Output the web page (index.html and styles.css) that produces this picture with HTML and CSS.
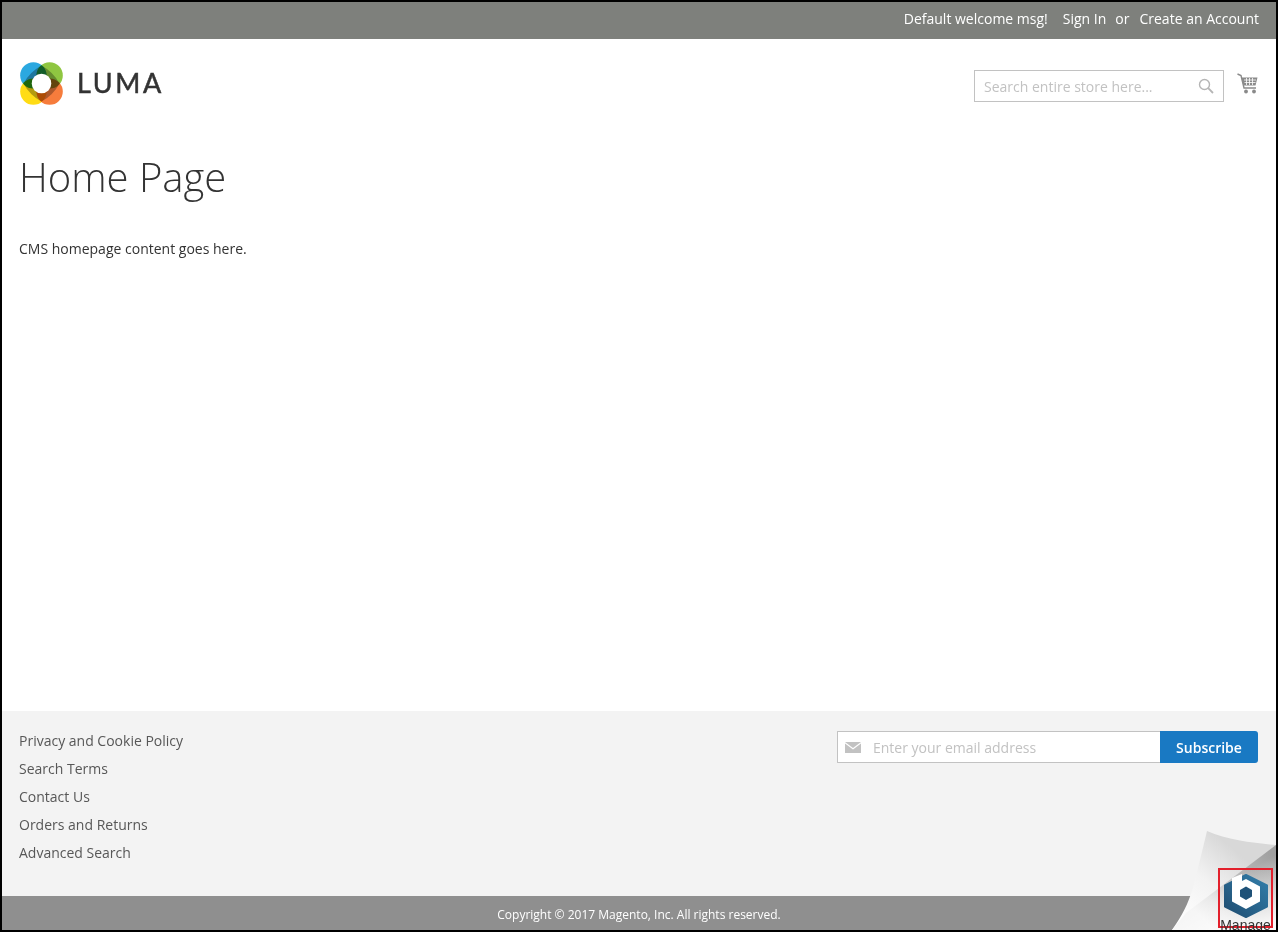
FILE: index.html
```html
<!DOCTYPE html>
<html lang="en">
<head>
<meta charset="utf-8">
<title>Home Page</title>
<link rel="stylesheet" href="styles.css">
</head>
<body>
<div class="frame">
  <div class="panel">
    <span class="welcome">Default welcome msg!</span>
    <a class="sign">Sign In</a>
    <span class="or">or</span>
    <a>Create an Account</a>
  </div>
  <header class="header">
    <div class="logo">
      <svg class="logo-mark" width="43" height="43" viewBox="0 0 44 44">
        <g class="logo-petals">
          <circle class="petal" cx="13.7" cy="13.7" r="13.5" fill="#2ba8e0"/>
          <circle class="petal" cx="30.3" cy="13.7" r="13.5" fill="#8fc641"/>
          <circle class="petal" cx="13.7" cy="30.3" r="13.5" fill="#ffdc14"/>
          <circle class="petal" cx="30.3" cy="30.3" r="13.5" fill="#f67c3c"/>
          <path class="petal" d="M22 3.5 Q34 10 40.5 22 Q34 34 22 40.5 Q10 34 3.5 22 Q10 10 22 3.5Z" fill="#b4b4b4"/>
        </g>
        <circle cx="22" cy="22" r="10" fill="#fff"/>
      </svg>
      <span class="logo-text">LUMA</span>
    </div>
    <div class="header-right">
      <div class="search">
        <span class="search-text">Search entire store here...</span>
        <svg width="16" height="16" viewBox="0 0 16 16" class="search-icon"><circle cx="6.5" cy="6.5" r="5" fill="none" stroke="#b5b5b5" stroke-width="1.4"/><path d="M10.2 10.2 L15 15" stroke="#b5b5b5" stroke-width="1.8"/></svg>
      </div>
      <svg class="cart" width="21" height="21" viewBox="0 0 21 21">
        <path d="M0.5 1 L4 2.5 L7 15 H19" fill="none" stroke="#8a8a8a" stroke-width="1.4"/>
        <path d="M4.5 4.5 H20.5 L18.5 12.5 H6.5Z" fill="#8a8a8a"/>
        <path d="M7 7 H19 M7.5 9.5 H18.5 M9.5 5 V12 M12.5 5 V12 M15.5 5 V12" stroke="#fff" stroke-width=".8"/>
        <circle cx="9" cy="18.5" r="1.9" fill="#8a8a8a"/>
        <circle cx="17" cy="18.5" r="1.9" fill="#8a8a8a"/>
      </svg>
    </div>
  </header>
  <main class="main">
    <h1 class="title">Home Page</h1>
    <p class="cms">CMS homepage content goes here.</p>
  </main>
  <footer class="footer">
    <ul class="links">
      <li>Privacy and Cookie Policy</li>
      <li>Search Terms</li>
      <li>Contact Us</li>
      <li>Orders and Returns</li>
      <li>Advanced Search</li>
    </ul>
    <div class="subscribe">
      <div class="email">
        <svg width="16" height="11" viewBox="0 0 16 11" class="mail"><path d="M0 0 H16 L8 6Z" fill="#c2c2c2"/><path d="M0 1.6 L8 7.6 L16 1.6 V11 H0Z" fill="#c2c2c2"/></svg>
        <span class="email-text">Enter your email address</span>
      </div>
      <div class="btn">Subscribe</div>
    </div>
  </footer>
  <div class="copyright">Copyright © 2017 Magento, Inc. All rights reserved.</div>
  <svg class="peel" width="108" height="102" viewBox="0 0 108 102">
    <defs>
      <linearGradient id="pg" gradientUnits="userSpaceOnUse" x1="10" y1="95" x2="70" y2="25">
        <stop offset="0" stop-color="#ffffff"/>
        <stop offset=".55" stop-color="#f2f2f2"/>
        <stop offset="1" stop-color="#d8d8d8"/>
      </linearGradient>
      <linearGradient id="wg" gradientUnits="userSpaceOnUse" x1="100" y1="22" x2="30" y2="85">
        <stop offset="0" stop-color="#a0a0a0"/>
        <stop offset=".45" stop-color="#bcbcbc"/>
        <stop offset=".8" stop-color="#e6e6e6"/>
        <stop offset="1" stop-color="#f4f4f4"/>
      </linearGradient>
      <linearGradient id="fade" gradientUnits="userSpaceOnUse" x1="76" y1="44" x2="104" y2="96">
        <stop offset="0" stop-color="#fff" stop-opacity="0"/>
        <stop offset="1" stop-color="#fff" stop-opacity=".9"/>
      </linearGradient>
    </defs>
    <path d="M4 102 C14 88 20 76 25 60 C30 40 35 20 39 3 C60 12 85 15 108 17 V102Z" fill="url(#pg)"/>
    <path d="M108 17 L18 85 L4 102 H108Z" fill="url(#wg)"/>
    <path d="M108 17 L18 85 L4 102 H108Z" fill="url(#fade)"/>
  </svg>
  <div class="manage">
    <svg width="46" height="46" viewBox="0 0 46 46">
      <defs><linearGradient id="hx" x1="0" y1="1" x2="1" y2="0"><stop offset="0" stop-color="#1f4c70"/><stop offset="1" stop-color="#337fab"/></linearGradient></defs>
      <path d="M23 2 L44 12.5 V33.5 L23 44 L2 33.5 V12.5Z" fill="url(#hx)" stroke="url(#hx)" stroke-width="2" stroke-linejoin="round"/>
      <path d="M9 5 L19 1 V8 L23 6 L37 13.5 V28.5 L23 36 L9 28.5Z" fill="#fff"/>
      <path d="M23 13.5 L29 17 V23.5 L23 27 L17 23.5 V17Z" fill="#1f5278"/>
    </svg>
    <span class="manage-text">Manage</span>
  </div>
</div>
</body>
</html>
```
FILE: styles.css
```css
html, body { margin: 0; padding: 0; height: 100%; }
body { font-family: "Open Sans", sans-serif; font-size: 14px; color: #333; background: #fff; overflow: hidden; }
.frame { position: relative; box-sizing: border-box; width: 1278px; height: 932px; border: 2px solid #000; display: flex; flex-direction: column; overflow: hidden; }
.panel { height: 37px; background: #7e807c; color: #fff; display: flex; justify-content: flex-end; align-items: center; padding: 0 17px 4px 0; line-height: 20px; flex: none; box-sizing: border-box; }
.welcome { margin-right: 15px; }
.or { margin: 0 10px 0 9px; }
.header { height: 90px; flex: none; display: flex; justify-content: space-between; padding: 0 18px 0 17px; box-sizing: border-box; }
.logo { display: flex; align-items: center; height: 44px; margin-top: 22px; gap: 14px; }
.logo-mark { margin: 1px 0 0 1px; }
.logo-petals { isolation: isolate; }
.petal { mix-blend-mode: multiply; }
.logo-text { font-family: Lato, sans-serif; font-weight: 400; font-size: 27px; letter-spacing: 2.6px; -webkit-text-stroke: .5px #333; color: #333; line-height: 44px; }
.header-right { display: flex; align-items: flex-start; }
.search { margin: 31px 0 0 1px; width: 250px; height: 32px; box-sizing: border-box; border: 1px solid #c2c2c2; display: flex; align-items: center; justify-content: space-between; padding: 0 9px 0 9px; }
.search-text { color: #c2c2c2; }
.search-icon { display: block; }
.cart { margin: 34px 0 0 13px; }
.main { flex: 1; padding: 0 17px; }
.title { font-weight: 300; font-size: 40px; line-height: 50px; margin: 23px 0 0; color: #333; }
.cms { margin: 37px 0 0; line-height: 20px; }
.footer { height: 185px; flex: none; background: #f3f3f3; display: flex; justify-content: space-between; padding: 20px 18px 0 17px; box-sizing: border-box; }
.links { list-style: none; margin: 0; padding: 0; }
.links li { line-height: 20px; margin-bottom: 8px; color: #575757; }
.subscribe { display: flex; height: 32px; width: 421px; }
.email { flex: 1; background: #fff; border: 1px solid #c2c2c2; border-right: 0; display: flex; align-items: center; box-sizing: border-box; padding-left: 7px; border-radius: 1px 0 0 1px; }
.mail { margin-right: 12px; }
.email-text { color: #c2c2c2; }
.btn { width: 98px; background: #1979c3; color: #fff; font-weight: 600; display: flex; align-items: center; justify-content: center; border-radius: 0 3px 3px 0; }
.copyright { height: 34px; flex: none; background: #8f8f8f; color: #fff; font-size: 12px; display: flex; align-items: center; justify-content: center; padding-top: 3px; box-sizing: border-box; }
.peel { position: absolute; right: 0; bottom: 0; }
.manage { position: absolute; right: 3px; bottom: 2px; width: 55px; height: 60px; box-sizing: border-box; border: 2px solid #e3202c; display: flex; flex-direction: column; align-items: center; padding-top: 3px; }
.manage svg { flex: none; display: block; }
.manage-text { font-family: "Liberation Sans", sans-serif; font-size: 14px; line-height: 12px; color: #333; }
```
